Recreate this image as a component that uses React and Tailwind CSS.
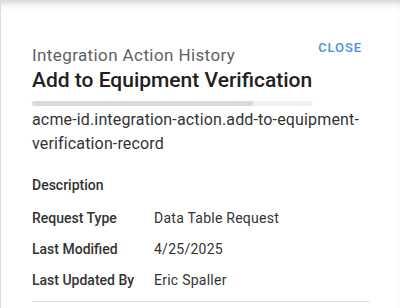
export default function App() {
  const rows = [
    ['Request Type', 'Data Table Request'],
    ['Last Modified', '4/25/2025'],
    ['Last Updated By', 'Eric Spaller'],
  ];

  return (
    <div
      className="w-[400px] h-[308px] overflow-hidden bg-white border-l border-[#dcdcdc] shadow-[inset_0_8px_8px_-6px_rgba(0,0,0,0.22)]"
      style={{ fontFamily: 'Roboto, "Liberation Sans", sans-serif' }}
    >
      <div className="pl-[31px] pr-[30px] pt-[40px]">
        <div className="flex items-start justify-between">
          <div className="pt-[4px]">
            <div className="text-[17px] leading-[22px] tracking-[0.4px] text-[#616161]">Integration Action History</div>
            <div className="w-[280px] overflow-hidden whitespace-nowrap text-[21px] leading-[28px] font-medium text-[#212121]">
              Add to Equipment Verification Record
            </div>
            <div className="mt-[7px] h-[5px] w-[280px] rounded-full bg-[#f1f1f1]">
              <div className="h-full w-[221px] rounded-full bg-[#dadada]" />
            </div>
          </div>
          <button className="mr-[8px] text-[13px] leading-[16px] font-medium tracking-[0.9px] text-[#4a90d9]">
            CLOSE
          </button>
        </div>

        <div className="mt-[2px] text-[16px] leading-[24px] tracking-[0.15px] text-[#333333] break-words">
          acme-id.integration-action.add-to-equipment-verification-record
        </div>

        <div className="mt-[21px] text-[14px] leading-[16px] font-medium text-[#333333]">Description</div>

        <div className="mt-[17px] flex flex-col gap-[15px]">
          {rows.map(([label, value]) => (
            <div key={label} className="flex items-start text-[14px] leading-[16px] text-[#333333]">
              <div className="w-[122px] font-medium">{label}</div>
              <div className="tracking-[0.25px]">{value}</div>
            </div>
          ))}
        </div>

        <div className="mt-[13px] h-px bg-[#e0e0e0]" />
      </div>
    </div>
  );
}
